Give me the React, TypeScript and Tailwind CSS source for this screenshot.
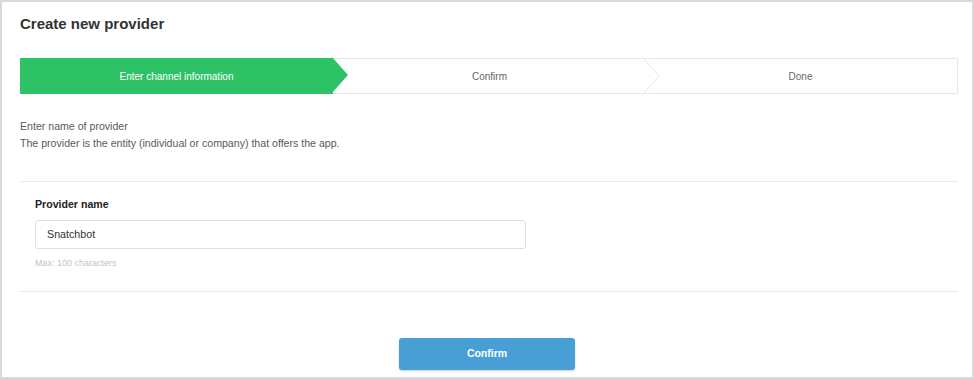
import React from "react";

function Chevron({ fill, stroke }: { fill?: string; stroke?: string }) {
  return (
    <svg width="18" height="36" viewBox="0 0 18 36" className="absolute right-[-17px] top-[-1px] z-10">
      {fill ? <polygon points="0,0 16,18 0,36" fill={fill} /> : null}
      {stroke ? <polyline points="0,0 16,18 0,36" fill="white" stroke={stroke} strokeWidth="1" /> : null}
    </svg>
  );
}

export default function App() {
  return (
    <div className="w-[974px] h-[379px] bg-[#d9d9d9] p-[2px] font-['Liberation_Sans',Arimo,Arial,Helvetica,sans-serif]">
      <div className="bg-white h-full w-full pl-[18px] pr-[14px] pt-[11px]">
        <h1 className="text-[15px] leading-[22px] font-bold text-[#333]">Create new provider</h1>

        <div className="mt-[23px] h-[36px] flex border border-[#e3e6ea] text-[10px]">
          <div className="relative w-[313px] bg-[#2ec266] text-white flex items-center justify-center -my-px -ml-px">
            Enter channel information
            <Chevron fill="#2ec266" />
          </div>
          <div className="relative w-[311px] flex items-center justify-center text-[#666]">
            <span className="pl-[2px]">Confirm</span>
            <Chevron stroke="#e3e6ea" />
          </div>
          <div className="flex-1 flex items-center justify-center text-[#666]">
            <span>Done</span>
          </div>
        </div>

        <div className="mt-[24px] text-[10.6px] leading-[17px] text-[#5a5a5a]">
          <p>Enter name of provider</p>
          <p>The provider is the entity (individual or company) that offers the app.</p>
        </div>

        <div className="mt-[29px] h-px bg-[#e8e9ec]" />

        <div className="px-[15px]">
          <div className="mt-[14px] text-[10.6px] leading-[16px] font-bold text-[#222]">Provider name</div>
          <div className="mt-[8px] w-[491px] h-[29px] border border-[#dcdfe3] rounded-[3px] flex items-center px-[11px] text-[10.7px] text-[#333]">
            Snatchbot
          </div>
          <div className="mt-[7px] text-[9px] leading-[14px] text-[#c0c4c9]">Max: 100 characters</div>
        </div>

        <div className="mt-[21px] h-px bg-[#e8e9ec]" />

        <div className="flex justify-center mt-[46px]">
          <button className="w-[176px] h-[32px] bg-[#489fd6] text-white text-[10.5px] font-bold rounded-[3px] shadow-[0_1px_2px_rgba(0,0,0,0.2)] ml-[-4px]">
            Confirm
          </button>
        </div>
      </div>
    </div>
  );
}
